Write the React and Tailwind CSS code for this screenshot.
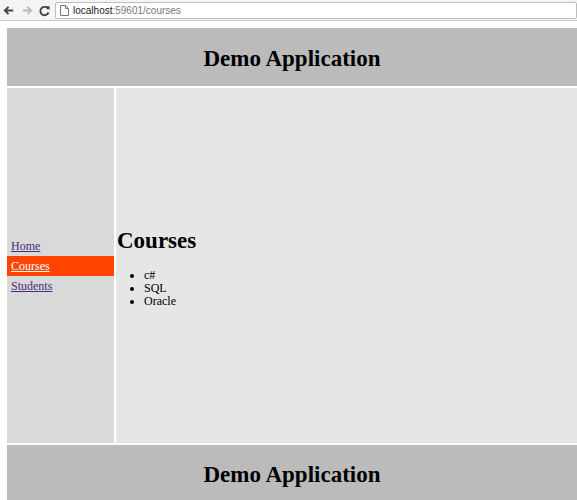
import React from "react";

const serif = { fontFamily: '"Liberation Serif", "Times New Roman", serif' };

function BrowserBar() {
  return (
    <div className="h-[21px] bg-[#f4f4f4] border-b border-[#c8c8c8] flex items-center gap-[4px] pl-[2px]" style={{ fontFamily: '"Liberation Sans", Arial, sans-serif' }}>
      {/* back */}
      <svg width="13" height="13" viewBox="0 0 14 14">
        <path d="M12 7H3M7 3L3 7l4 4" stroke="#444" strokeWidth="2" fill="none" />
      </svg>
      {/* forward */}
      <svg width="13" height="13" viewBox="0 0 14 14" className="ml-[2px]">
        <path d="M2 7h9M7 3l4 4-4 4" stroke="#b8b8b8" strokeWidth="2" fill="none" />
      </svg>
      {/* reload */}
      <svg width="13" height="13" viewBox="0 0 14 14">
        <path d="M11 5.5A4.5 4.5 0 1 0 11.3 9" stroke="#444" strokeWidth="2" fill="none" />
        <path d="M8.5 2.5h4v4z" fill="#444" />
      </svg>
      <div className="flex-1 h-[17px] bg-white border border-[#bdbdbd] rounded-[2px] flex items-center gap-[4px] pl-[4px]">
        <svg width="9" height="11" viewBox="0 0 9 11">
          <path d="M0.5 0.5h5l3 3v7h-8z M5.5 0.5v3h3" stroke="#777" fill="none" />
        </svg>
        <span className="text-[10px] text-[#222]">
          localhost<span className="text-[#777]">:59601/courses</span>
        </span>
      </div>
    </div>
  );
}

export default function App() {
  return (
    <div className="bg-white h-[500px] overflow-hidden">
      <BrowserBar />
      <div className="pl-[7px] pt-[7px] flex flex-col gap-[2px]" style={serif}>
        <div className="h-[58px] bg-[#bbbbbb] flex items-center justify-center pt-[4px]">
          <h1 className="text-[23px] font-bold text-black">Demo Application</h1>
        </div>
        <div className="h-[355px] flex gap-[2px]">
          <nav className="w-[107px] bg-[#d9d9d9] flex flex-col justify-center text-[12px]">
            <a href="#" className="h-[20px] flex items-center pl-[4px] underline text-[#4b2a7b]">Home</a>
            <a href="#" className="h-[20px] flex items-center pl-[4px] underline text-white bg-[#ff4500]">Courses</a>
            <a href="#" className="h-[20px] flex items-center pl-[4px] underline text-[#4b2a7b]">Students</a>
          </nav>
          <main className="flex-1 bg-[#e6e6e6] flex flex-col justify-center pl-[1px] pt-[4px]">
            <h2 className="text-[23px] font-bold text-black leading-[28px]">Courses</h2>
            <ul className="list-disc pl-[27px] mt-[14px] text-[12px] leading-[13px] text-black">
              <li>c#</li>
              <li>SQL</li>
              <li>Oracle</li>
            </ul>
          </main>
        </div>
        <div className="h-[58px] bg-[#bbbbbb] flex items-center justify-center pt-[2px]">
          <h1 className="text-[23px] font-bold text-black">Demo Application</h1>
        </div>
      </div>
    </div>
  );
}
